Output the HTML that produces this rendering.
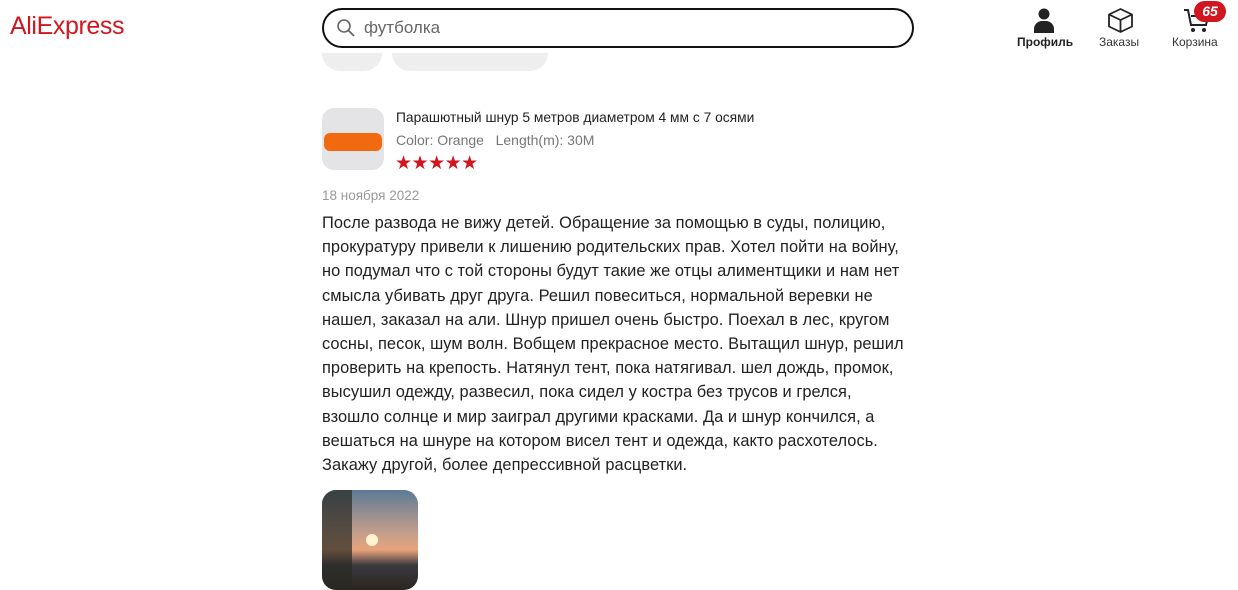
<!DOCTYPE html>
<html><head><meta charset="utf-8"><style>
body{margin:0;width:1238px;height:572px;overflow:hidden;background:#fff;font-family:"Liberation Sans",sans-serif;position:relative;color:#222}
.a{position:absolute}
</style></head><body>
<div class="a" style="left:10px;top:12px;font-size:25px;color:#d0161e;letter-spacing:-0.4px">AliExpress</div>
<div class="a" style="left:322px;top:53px;width:60px;height:18px;background:#eee;border-radius:0 0 20px 20px"></div>
<div class="a" style="left:392px;top:53px;width:156px;height:18px;background:#eee;border-radius:0 0 20px 20px"></div>
<div class="a" style="left:322px;top:8px;width:588px;height:36px;border:2px solid #111;border-radius:20px;background:#fff"></div>
<svg class="a" style="left:336px;top:18px" width="20" height="20" viewBox="0 0 20 20"><circle cx="8" cy="8" r="6" fill="none" stroke="#666" stroke-width="1.6"/><path d="M12.5 12.5L18 18" stroke="#666" stroke-width="1.8"/></svg>
<div class="a" style="left:364px;top:18px;font-size:17px;color:#666">футболка</div>
<svg class="a" style="left:1032px;top:7px" width="24" height="26" viewBox="0 0 24 26"><circle cx="12" cy="7" r="5.5" fill="#222"/><path d="M2 26v-4a8 8 0 0 1 8-8h4a8 8 0 0 1 8 8v4z" fill="#222"/></svg>
<div class="a" style="left:1017px;top:35px;font-size:12px;font-weight:bold">Профиль</div>
<svg class="a" style="left:1107px;top:7px" width="27" height="26" viewBox="0 0 27 26"><path d="M13.5 2L25 7.5v12L13.5 25 2 19.5v-12z M2 7.5l11.5 5.5L25 7.5 M13.5 13v12" fill="none" stroke="#222" stroke-width="1.8" stroke-linejoin="round"/></svg>
<div class="a" style="left:1099px;top:35px;font-size:12px;color:#333">Заказы</div>
<svg class="a" style="left:1183px;top:8px" width="28" height="26" viewBox="0 0 28 26"><path d="M1 2h4l3 15h15l2-9H8" fill="none" stroke="#222" stroke-width="2"/><circle cx="10" cy="22" r="2" fill="#222"/><circle cx="21" cy="22" r="2" fill="#222"/></svg>
<div class="a" style="left:1194px;top:1px;width:32px;height:21px;border-radius:11px;background:#d0161e;color:#fff;font-size:14px;font-weight:bold;font-style:italic;text-align:center;line-height:21px">65</div>
<div class="a" style="left:1172px;top:35px;font-size:12px;color:#333">Корзина</div>
<div class="a" style="left:322px;top:108px;width:62px;height:62px;border-radius:12px;background:#e4e4e6;overflow:hidden"><div style="position:absolute;left:2px;top:25px;width:58px;height:18px;background:#f26a10;border-radius:6px"></div></div>
<div class="a" style="left:396px;top:110px;font-size:13.8px;color:#222">Парашютный шнур 5 метров диаметром 4 мм с 7 осями</div>
<div class="a" style="left:396px;top:132px;font-size:14px;color:#777">Color: Orange&nbsp;&nbsp; Length(m): 30M</div>
<div class="a" style="left:395px;top:152px;font-size:19px;color:#d0161e;letter-spacing:-0.5px">★★★★★</div>
<div class="a" style="left:322px;top:188px;font-size:13.5px;color:#999">18 ноября 2022</div>
<div class="a" style="left:322px;top:211px;width:620px;font-size:16.4px;line-height:24.2px;color:#222;letter-spacing:0.05px">После развода не вижу детей. Обращение за помощью в суды, полицию,<br>прокуратуру привели к лишению родительских прав. Хотел пойти на войну,<br>но подумал что с той стороны будут такие же отцы алиментщики и нам нет<br>смысла убивать друг друга. Решил повеситься, нормальной веревки не<br>нашел, заказал на али. Шнур пришел очень быстро. Поехал в лес, кругом<br>сосны, песок, шум волн. Вобщем прекрасное место. Вытащил шнур, решил<br>проверить на крепость. Натянул тент, пока натягивал. шел дождь, промок,<br>высушил одежду, развесил, пока сидел у костра без трусов и грелся,<br>взошло солнце и мир заиграл другими красками. Да и шнур кончился, а<br>вешаться на шнуре на котором висел тент и одежда, както расхотелось.<br>Закажу другой, более депрессивной расцветки.</div>
<div class="a" style="left:322px;top:490px;width:96px;height:100px;border-radius:14px;overflow:hidden;background:linear-gradient(#5d7a96 0%,#c9a08a 45%,#e8a27a 60%,#3a3a40 75%,#2a2520 100%)"><div style="position:absolute;left:44px;top:44px;width:12px;height:12px;border-radius:50%;background:#fff3d0"></div><div style="position:absolute;left:0;top:0;width:30px;height:100px;background:#2a2a22;opacity:.7"></div></div>
</body></html>
